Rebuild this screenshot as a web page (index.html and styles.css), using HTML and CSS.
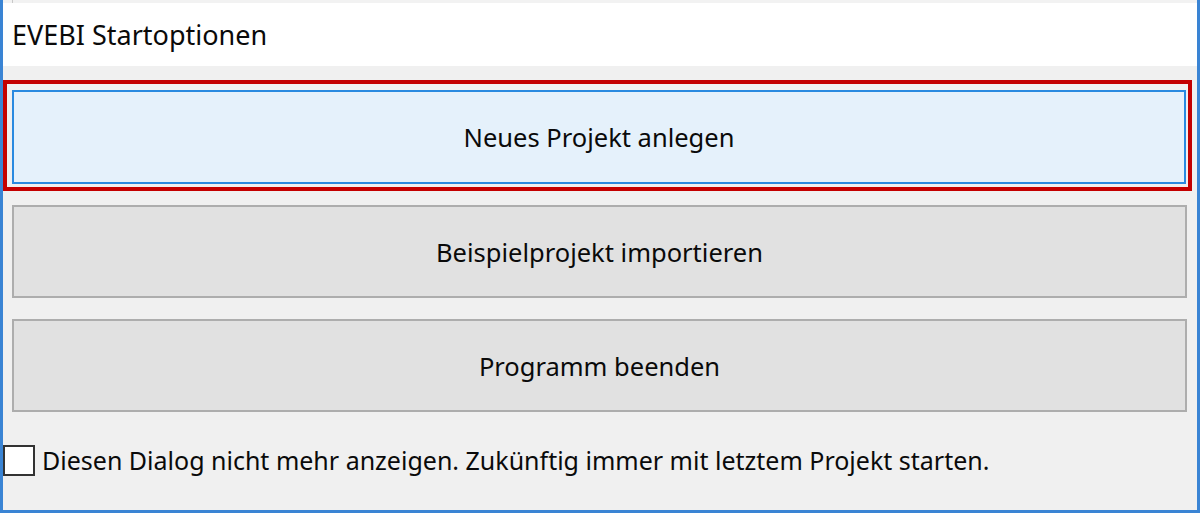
FILE: index.html
```html
<!DOCTYPE html>
<html lang="de">
<head>
    <meta charset="UTF-8">
    <title>EVEBI Startoptionen</title>
    <link rel="stylesheet" href="styles.css">
</head>
<body>
    <div class="topstrip"><span class="topline"></span></div>
    <div class="window">
        <div class="caption">EVEBI Startoptionen</div>
        <div class="content">
            <div class="mark">
                <div class="btn btn-focus">Neues Projekt anlegen</div>
            </div>
            <div class="btn">Beispielprojekt importieren</div>
            <div class="btn">Programm beenden</div>
            <label class="check">
                <span class="box"></span>
                <span class="check-text">Diesen Dialog nicht mehr anzeigen. Zukünftig immer mit letztem Projekt starten.</span>
            </label>
        </div>
    </div>
</body>
</html>
```

FILE: styles.css
```css
* {
    margin: 0;
    padding: 0;
    box-sizing: border-box;
}
body{
    width: 1200px;
    height: 513px;
    overflow: hidden;
    background: #f0f0f0;
    font-family: "Noto Sans", "Open Sans", sans-serif;
    color: #0a0a0a;
}
.topstrip{
    height: 3px;
    background: #f2f2f2;
    border-left: 3px solid #3a84d4;
    border-right: 3px solid #3a84d4;
}
.topline{
    display: block;
    width: 1px;
    height: 3px;
    margin-left: 9px;
    background: #c8c8c8;
}
.window{
    height: 510px;
    border: 3px solid #3a84d4;
    border-top: 0;
    display: flex;
    flex-direction: column;
}
.caption{
    height: 63px;
    flex: none;
    background: #fff;
    display: flex;
    align-items: center;
    padding-left: 9px;
    font-size: 27px;
}
.content{
    flex: 1;
    background: #f0f0f0;
    display: flex;
    flex-direction: column;
    padding-top: 14px;
}
.mark{
    margin-right: 5px;
    border: 4px solid #c40000;
    padding: 6px 2px 3px 5px;
}
.btn{
    height: 93px;
    margin: 21px 10px 0 9px;
    background: #e1e1e1;
    border: 2px solid #adadad;
    display: flex;
    align-items: center;
    justify-content: center;
    font-size: 25.5px;
}
.mark + .btn{
    margin-top: 14px;
}
.mark .btn{
    margin: 0;
    height: 94px;
}
.btn-focus{
    background: #e5f1fb;
    border-color: #2a8ae0;
}
.check{
    display: flex;
    align-items: center;
    margin-top: 31px;
    gap: 7px;
    font-size: 25px;
}
.box{
    width: 32px;
    height: 31px;
    flex: none;
    background: #fff;
    border: 2px solid #333;
}
```
